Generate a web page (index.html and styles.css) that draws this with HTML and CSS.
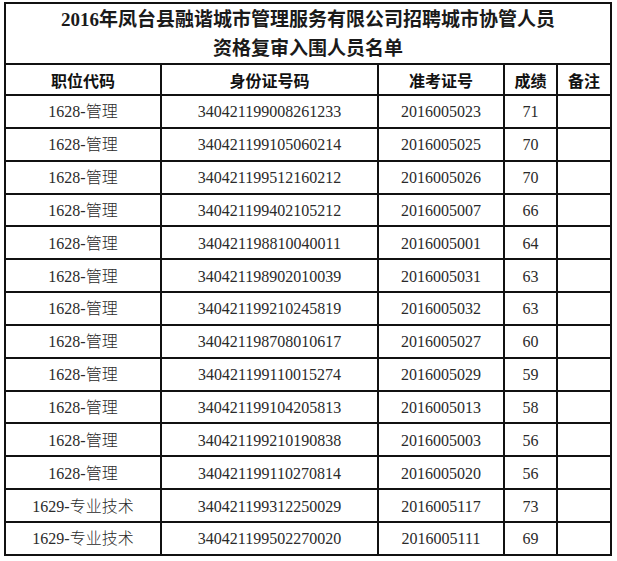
FILE: index.html
```html
<!DOCTYPE html>
<html lang="zh-CN">
<head>
<meta charset="utf-8">
<title>资格复审入围人员名单</title>
<link rel="stylesheet" href="styles.css">
</head>
<body>
<table class="roster">
  <colgroup>
    <col class="c1"><col class="c2"><col class="c3"><col class="c4"><col class="c5">
  </colgroup>
  <thead>
    <tr class="title-row">
      <th colspan="5" class="title">2016年凤台县融谐城市管理服务有限公司招聘城市协管人员<br>资格复审入围人员名单</th>
    </tr>
    <tr class="head-row">
      <th>职位代码</th><th>身份证号码</th><th>准考证号</th><th>成绩</th><th>备注</th>
    </tr>
  </thead>
  <tbody>
    <tr><td>1628-管理</td><td>340421199008261233</td><td>2016005023</td><td>71</td><td></td></tr>
    <tr><td>1628-管理</td><td>340421199105060214</td><td>2016005025</td><td>70</td><td></td></tr>
    <tr><td>1628-管理</td><td>340421199512160212</td><td>2016005026</td><td>70</td><td></td></tr>
    <tr><td>1628-管理</td><td>340421199402105212</td><td>2016005007</td><td>66</td><td></td></tr>
    <tr><td>1628-管理</td><td>340421198810040011</td><td>2016005001</td><td>64</td><td></td></tr>
    <tr><td>1628-管理</td><td>340421198902010039</td><td>2016005031</td><td>63</td><td></td></tr>
    <tr><td>1628-管理</td><td>340421199210245819</td><td>2016005032</td><td>63</td><td></td></tr>
    <tr><td>1628-管理</td><td>340421198708010617</td><td>2016005027</td><td>60</td><td></td></tr>
    <tr><td>1628-管理</td><td>340421199110015274</td><td>2016005029</td><td>59</td><td></td></tr>
    <tr><td>1628-管理</td><td>340421199104205813</td><td>2016005013</td><td>58</td><td></td></tr>
    <tr><td>1628-管理</td><td>340421199210190838</td><td>2016005003</td><td>56</td><td></td></tr>
    <tr><td>1628-管理</td><td>340421199110270814</td><td>2016005020</td><td>56</td><td></td></tr>
    <tr><td>1629-专业技术</td><td>340421199312250029</td><td>2016005117</td><td>73</td><td></td></tr>
    <tr><td>1629-专业技术</td><td>340421199502270020</td><td>2016005111</td><td>69</td><td></td></tr>
  </tbody>
</table>
</body>
</html>
```
FILE: styles.css
```css
html, body {
  margin: 0;
  padding: 0;
  background: #ffffff;
}

body {
  padding: 2px 0 0 4px;
}

.roster {
  border-collapse: collapse;
  table-layout: fixed;
  width: 606px;
  color: #2a2a2a;
  font-family: "Liberation Serif", "Noto Sans CJK SC", serif;
}

.c1 { width: 156px; }
.c2 { width: 217px; }
.c3 { width: 126px; }
.c4 { width: 53px; }
.c5 { width: 54px; }

.roster th,
.roster td {
  border: 2px solid #111111;
  padding: 0;
  text-align: center;
  vertical-align: middle;
}

.title {
  height: 59px;
  font-size: 19px;
  font-weight: bold;
  line-height: 29px;
  color: #1a1a1a;
}

.head-row th {
  height: 29px;
  font-family: "Noto Sans CJK SC", sans-serif;
  font-size: 16px;
  line-height: 20px;
  font-weight: bold;
  color: #111111;
}

.roster td {
  height: 28.85px;
  padding-top: 2px;
  font-size: 16px;
  line-height: 20px;
  font-weight: 300;
}
```
